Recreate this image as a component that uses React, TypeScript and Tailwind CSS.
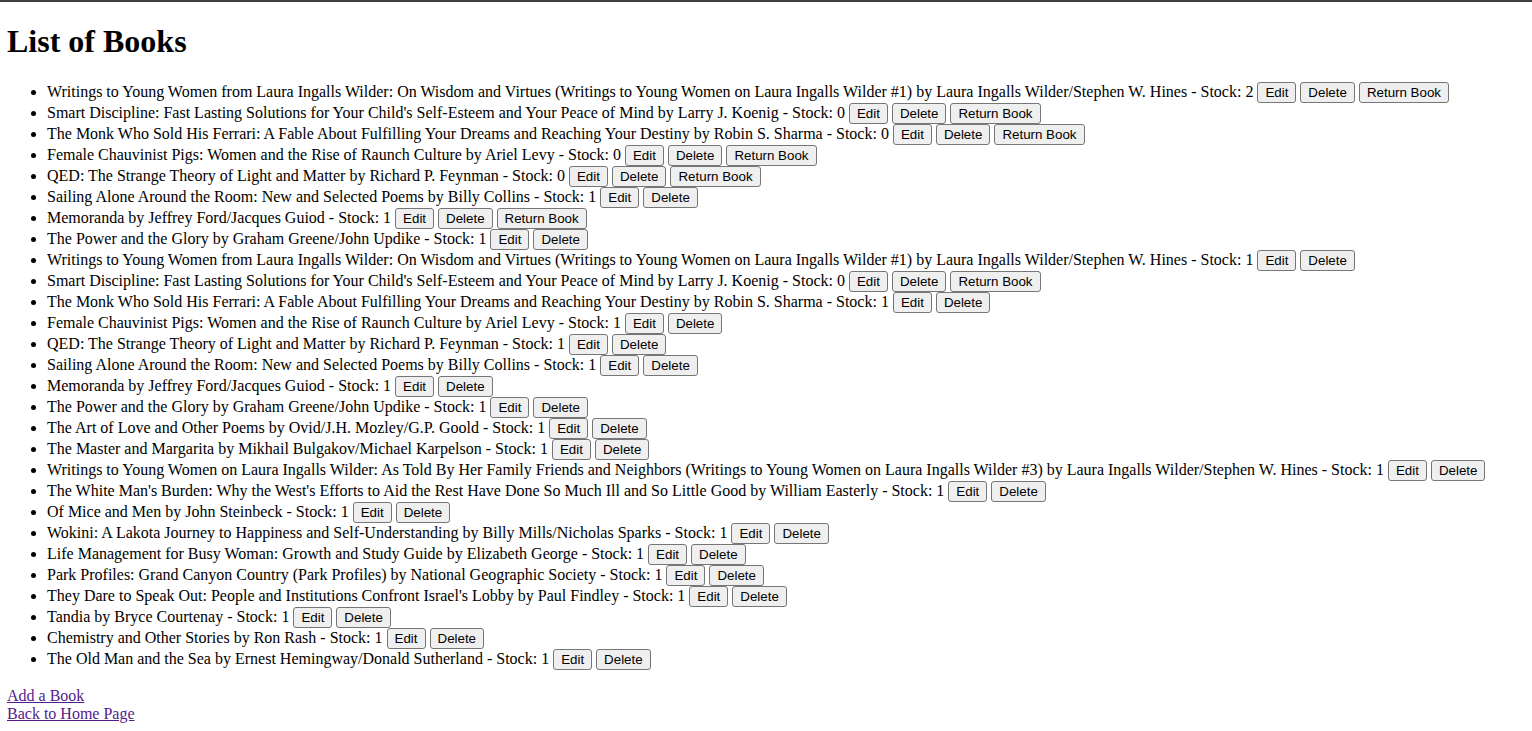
const books: { title: string; stock: number; canReturn: boolean }[] = [
  { title: "Writings to Young Women from Laura Ingalls Wilder: On Wisdom and Virtues (Writings to Young Women on Laura Ingalls Wilder #1) by Laura Ingalls Wilder/Stephen W. Hines", stock: 2, canReturn: true },
  { title: "Smart Discipline: Fast Lasting Solutions for Your Child's Self-Esteem and Your Peace of Mind by Larry J. Koenig", stock: 0, canReturn: true },
  { title: "The Monk Who Sold His Ferrari: A Fable About Fulfilling Your Dreams and Reaching Your Destiny by Robin S. Sharma", stock: 0, canReturn: true },
  { title: "Female Chauvinist Pigs: Women and the Rise of Raunch Culture by Ariel Levy", stock: 0, canReturn: true },
  { title: "QED: The Strange Theory of Light and Matter by Richard P. Feynman", stock: 0, canReturn: true },
  { title: "Sailing Alone Around the Room: New and Selected Poems by Billy Collins", stock: 1, canReturn: false },
  { title: "Memoranda by Jeffrey Ford/Jacques Guiod", stock: 1, canReturn: true },
  { title: "The Power and the Glory by Graham Greene/John Updike", stock: 1, canReturn: false },
  { title: "Writings to Young Women from Laura Ingalls Wilder: On Wisdom and Virtues (Writings to Young Women on Laura Ingalls Wilder #1) by Laura Ingalls Wilder/Stephen W. Hines", stock: 1, canReturn: false },
  { title: "Smart Discipline: Fast Lasting Solutions for Your Child's Self-Esteem and Your Peace of Mind by Larry J. Koenig", stock: 0, canReturn: true },
  { title: "The Monk Who Sold His Ferrari: A Fable About Fulfilling Your Dreams and Reaching Your Destiny by Robin S. Sharma", stock: 1, canReturn: false },
  { title: "Female Chauvinist Pigs: Women and the Rise of Raunch Culture by Ariel Levy", stock: 1, canReturn: false },
  { title: "QED: The Strange Theory of Light and Matter by Richard P. Feynman", stock: 1, canReturn: false },
  { title: "Sailing Alone Around the Room: New and Selected Poems by Billy Collins", stock: 1, canReturn: false },
  { title: "Memoranda by Jeffrey Ford/Jacques Guiod", stock: 1, canReturn: false },
  { title: "The Power and the Glory by Graham Greene/John Updike", stock: 1, canReturn: false },
  { title: "The Art of Love and Other Poems by Ovid/J.H. Mozley/G.P. Goold", stock: 1, canReturn: false },
  { title: "The Master and Margarita by Mikhail Bulgakov/Michael Karpelson", stock: 1, canReturn: false },
  { title: "Writings to Young Women on Laura Ingalls Wilder: As Told By Her Family Friends and Neighbors (Writings to Young Women on Laura Ingalls Wilder #3) by Laura Ingalls Wilder/Stephen W. Hines", stock: 1, canReturn: false },
  { title: "The White Man's Burden: Why the West's Efforts to Aid the Rest Have Done So Much Ill and So Little Good by William Easterly", stock: 1, canReturn: false },
  { title: "Of Mice and Men by John Steinbeck", stock: 1, canReturn: false },
  { title: "Wokini: A Lakota Journey to Happiness and Self-Understanding by Billy Mills/Nicholas Sparks", stock: 1, canReturn: false },
  { title: "Life Management for Busy Woman: Growth and Study Guide by Elizabeth George", stock: 1, canReturn: false },
  { title: "Park Profiles: Grand Canyon Country (Park Profiles) by National Geographic Society", stock: 1, canReturn: false },
  { title: "They Dare to Speak Out: People and Institutions Confront Israel's Lobby by Paul Findley", stock: 1, canReturn: false },
  { title: "Tandia by Bryce Courtenay", stock: 1, canReturn: false },
  { title: "Chemistry and Other Stories by Ron Rash", stock: 1, canReturn: false },
  { title: "The Old Man and the Sea by Ernest Hemingway/Donald Sutherland", stock: 1, canReturn: false },
];

function Btn({ label }: { label: string }) {
  return (
    <button
      type="button"
      className="ml-[4px] inline-block align-baseline rounded-[3px] border border-[#767676] bg-[#efefef] px-[7px] py-[2px] text-[13.333px] leading-[15px] text-black [font-family:'Liberation_Sans',Arial,sans-serif]"
    >
      {label}
    </button>
  );
}

export default function App() {
  return (
    <div className="min-h-screen bg-white text-black [font-family:'Liberation_Serif','Times_New_Roman',serif] text-[16px]">
      <div className="h-[2px] bg-[#3f3f3f]" />
      <div className="px-[7px] pt-[21px]">
        <h1 className="text-[32px] font-bold leading-[37px]">List of Books</h1>

        {/* Book list */}
        <ul className="mt-[21px] mb-[18px] list-disc pl-10">
          {books.map((b, i) => (
            <li key={i} className="h-[21px] leading-[21px] whitespace-nowrap">
              {b.title} - Stock: {b.stock}
              <Btn label="Edit" />
              <Btn label="Delete" />
              {b.canReturn && <Btn label="Return Book" />}
            </li>
          ))}
        </ul>

        <div className="leading-[18px]">
          <a href="#" className="text-[#551a8b] underline">Add a Book</a>
        </div>
        <div className="leading-[18px]">
          <a href="#" className="text-[#551a8b] underline">Back to Home Page</a>
        </div>
      </div>
    </div>
  );
}
